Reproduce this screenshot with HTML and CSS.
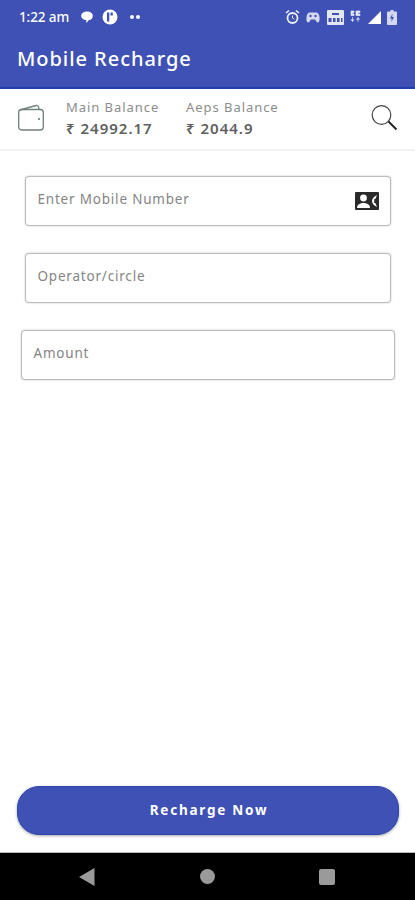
FILE: index.html
```html
<!DOCTYPE html>
<html lang="en">
<head>
  <meta charset="UTF-8" />
  <meta name="viewport" content="width=device-width, initial-scale=1.0"/>
  <title>Mobile Recharge</title>
  <link rel="stylesheet" href="styles.css">
</head>
<body>
  <div class="page">

    <header class="app-bar">
      <div class="status-bar">
        <span class="clock">1:22 am</span>
        <svg class="notif" width="14" height="14" viewBox="0 0 14 14"><path d="M7 1.500c3.300 0 5.800 1.800 5.800 4.400 0 2.300-1.900 4-4.200 4.300L6.600 13l-.5-2.900C3.400 9.800 1.200 8.200 1.200 5.900 1.200 3.300 3.700 1.500 7 1.500z" fill="#fff"/></svg>
        <svg class="notif" width="16" height="16" viewBox="0 0 16 16"><circle cx="8" cy="8" r="7.500" fill="#fff"/><path d="M5 3.500h2.300v9H5zM8.500 3.500h2.300v3H8.500z" fill="#3f51b5"/></svg>
        <span class="more-dots"><i></i><i></i></span>
        <span class="status-right">
          <svg width="15" height="16" viewBox="0 0 15 16"><circle cx="7.500" cy="9" r="5" fill="none" stroke="#eef0fa" stroke-width="1.800"/><path d="M7.500 6.500V9l1.800 1.200" fill="none" stroke="#eef0fa"/><path d="M1 4l3-2.500M14 4l-3-2.500" stroke="#eef0fa" stroke-width="1.600"/></svg>
          <svg width="14" height="13" viewBox="0 0 14 13"><path d="M4 1.500h6c2 0 3 1.500 3.500 4.500.4 3-.3 5.500-1.500 5.500S10 9.500 9 8.500H5c-1 1-1.800 3-3 3S.1 9 .5 6C1 3 2 1.500 4 1.500z" fill="#d5d9ef"/><circle cx="4.500" cy="5" r="1.200" fill="#3f51b5"/><circle cx="9.500" cy="5" r="1.200" fill="#3f51b5"/></svg>
          <svg width="17" height="15" viewBox="0 0 17 15"><rect width="17" height="15" rx="1" fill="#e3e6f5"/><path d="M5 3h7v2H5zM1.500 8h3v4h-3zM6 8h2.500v4H6zM10 8h2.500v4H10zM14 8h1.500v4H14z" fill="#3f51b5"/></svg>
          <svg width="11" height="15" viewBox="0 0 11 15"><path d="M1 1h3v1.500H2.500V4H4v1.500H1zM6 1h4v1.500H8V4h2v1.500H6zM2.500 7v4M1 9.500l1.500 2 1.500-2M8 12V8M6.500 9.500L8 7.500l1.500 2" fill="#e3e6f5" stroke="#e3e6f5" stroke-width=".7"/></svg>
          <svg width="13" height="13" viewBox="0 0 13 13"><path d="M13 0v13H0z" fill="#fff"/></svg>
          <svg width="10" height="15" viewBox="0 0 10 15"><path d="M3.500 0h3v1.500H9a1 1 0 0 1 1 1V14a1 1 0 0 1-1 1H1a1 1 0 0 1-1-1V2.500a1 1 0 0 1 1-1h2.500z" fill="#d5d9ef"/><path d="M5.500 3.500L3 8.500h1.800L4.300 12 7 7H5.200z" fill="#3f51b5"/></svg>
        </span>
      </div>
      <h1 class="app-title">Mobile Recharge</h1>
    </header>

    <section class="balance-bar">
      <svg class="wallet-icon" width="28" height="28" viewBox="0 0 28 28"><path d="M3 6L19 1.500c1.200-.3 2.300.3 2.500 1.500L22 5.500" fill="none" stroke="#6f8078" stroke-width="1.300"/><rect x="1.700" y="5.500" width="24.600" height="20.500" rx="3" fill="none" stroke="#6f8078" stroke-width="1.300"/><circle cx="22" cy="15" r="1.100" fill="#6f8078"/></svg>
      <div class="balance">
        <span class="balance-label">Main Balance</span>
        <span class="balance-value">₹ 24992.17</span>
      </div>
      <div class="balance">
        <span class="balance-label">Aeps Balance</span>
        <span class="balance-value">₹ 2044.9</span>
      </div>
      <svg class="search-icon" width="28" height="28" viewBox="0 0 28 28"><circle cx="11.500" cy="11" r="9.300" fill="none" stroke="#444" stroke-width="1.200"/><path d="M18.500 17.500L26.500 25.500" stroke="#222" stroke-width="2"/></svg>
    </section>

    <main class="form">
      <div class="field field-narrow">
        <span class="field-text">Enter Mobile Number</span>
        <svg class="contact-icon" width="24" height="18" viewBox="0 0 24 18"><rect width="24" height="18" rx="1" fill="#2a2a2a"/><circle cx="8.500" cy="6" r="3.400" fill="#fff"/><path d="M2 16c0-3.600 3.300-5 6.500-5s6.500 1.400 6.500 5z" fill="#fff"/><path d="M22 3c-3 1.500-5 3.500-5 6s2 4.500 5 6l-1.600-4h-1.200V7h1.200z" fill="#fff"/></svg>
      </div>
      <div class="field field-narrow">
        <span class="field-text">Operator/circle</span>
      </div>
      <div class="field field-wide">
        <span class="field-text">Amount</span>
      </div>
    </main>

    <div class="action">
      <button class="recharge-btn">Recharge Now</button>
    </div>

    <nav class="nav-bar">
      <svg width="16" height="18" viewBox="0 0 16 18"><path d="M15.500 0v18L0 9z" fill="#9a9a9a"/></svg>
      <span class="nav-home"></span>
      <span class="nav-square"></span>
    </nav>

  </div>
</body>
</html>
```

FILE: styles.css
```css
* {
  box-sizing: border-box;
}

body {
  margin: 0;
  background: #fff;
  font-family: 'Noto Sans', 'Open Sans', sans-serif;
  color: #333;
}

.page {
  display: flex;
  flex-direction: column;
  height: 900px;
  overflow: hidden;
}

.app-bar {
  height: 89px;
  background: #3f51b5;
  border-bottom: 2px solid #1f3fb0;
  color: #fff;
}

.status-bar {
  display: flex;
  align-items: center;
  height: 34px;
  padding: 0 18px 0 19px;
}

.clock {
  font-size: 13.500px;
  font-weight: 500;
  letter-spacing: -0.1px;
  margin-right: 11px;
}

.notif {
  margin-right: 8px;
}

.more-dots {
  display: flex;
  gap: 2px;
  margin-left: 4px;
}

.more-dots i {
  width: 4px;
  height: 4px;
  border-radius: 50%;
  background: #fff;
}

.status-right {
  display: flex;
  align-items: center;
  gap: 6.400px;
  margin-left: auto;
}

.app-title {
  margin: 11px 0 0 17px;
  font-size: 20px;
  font-weight: 500;
  letter-spacing: 0.950px;
  line-height: 27px;
}

.balance-bar {
  display: flex;
  align-items: center;
  height: 62px;
  padding: 0 17px 2px 17px;
  border-bottom: 2px solid #f1f1f1;
}

.wallet-icon {
  margin-right: 21px;
}

.balance {
  display: flex;
  flex-direction: column;
  width: 120px;
}

.balance-label {
  font-size: 13px;
  line-height: 19px;
  letter-spacing: 0.950px;
  color: #8c8c8c;
}

.balance-value {
  font-size: 15px;
  font-weight: 600;
  line-height: 22px;
  letter-spacing: 1px;
  color: #5f5f5f;
}

.search-icon {
  margin-left: auto;
}

.form {
  display: flex;
  flex: 1;
  flex-direction: column;
  align-items: center;
  gap: 27px;
  padding-top: 25px;
}

.field {
  display: flex;
  align-items: center;
  justify-content: space-between;
  height: 50px;
  background: #fff;
  border: 1px solid #bdbdbd;
  border-radius: 4px;
  box-shadow: 0 0 2px rgba(0, 0, 0, 0.25);
  padding: 0 11px 0 12px;
}

.field-narrow {
  width: 366px;
}

.field-wide {
  width: 374px;
}

.field-text {
  font-size: 13.500px;
  letter-spacing: 0.8px;
  color: #858585;
  padding-bottom: 4px;
}

.action {
  padding: 0 16px 17px 17px;
}

.recharge-btn {
  display: block;
  width: 100%;
  height: 49px;
  background: #3f51b5;
  border: 1px solid #2f45ae;
  border-radius: 22px;
  box-shadow: 0 1px 3px rgba(0, 0, 0, 0.35);
  color: #fff;
  font-family: inherit;
  font-size: 13.500px;
  font-weight: 700;
  letter-spacing: 1.750px;
  padding: 0 0 2px 2px;
}

.nav-bar {
  display: flex;
  align-items: center;
  justify-content: space-between;
  height: 48px;
  background: #000;
  border-top: 1px solid #b5b5b5;
  padding: 0 80px 0 79px;
}

.nav-home {
  width: 15px;
  height: 15px;
  border-radius: 50%;
  background: #9a9a9a;
}

.nav-square {
  width: 16px;
  height: 16px;
  border-radius: 2px;
  background: #9a9a9a;
}
```
